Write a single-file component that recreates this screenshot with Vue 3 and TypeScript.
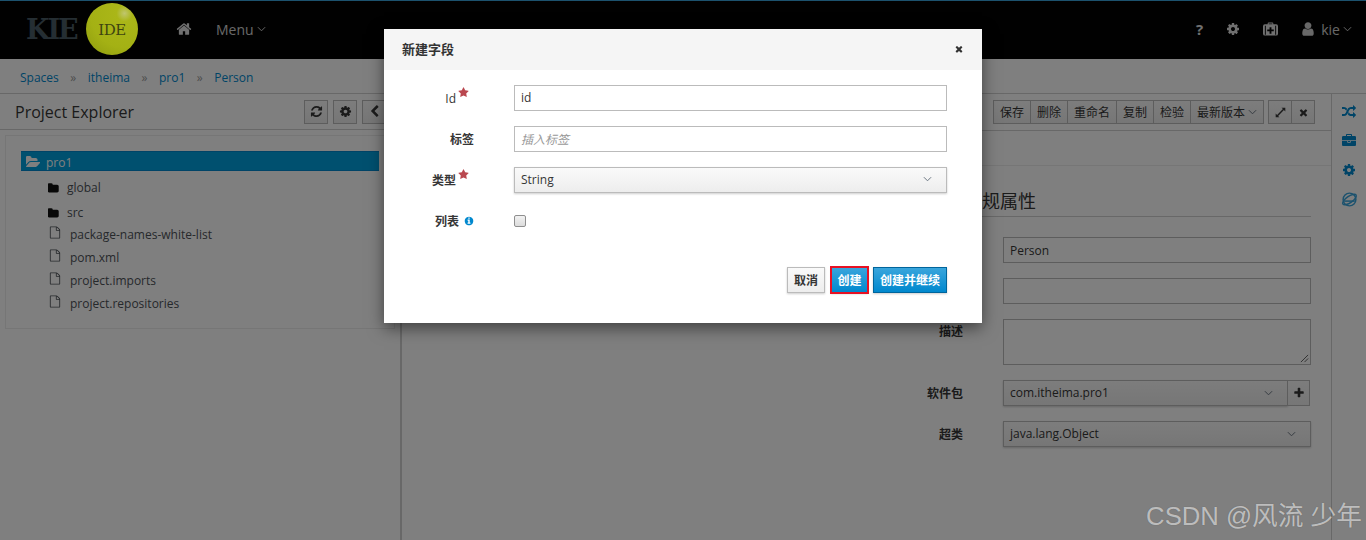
<template>
  <div class="app">
    <header class="topbar">
      <div class="logo">
        <span class="kie">KIE</span>
        <span class="ball">IDE</span>
      </div>
      <svg class="ico home" viewBox="0 0 1792 1792"><path :d="icons.home" /></svg>
      <span class="menu">Menu<svg class="caret" viewBox="0 0 10 6"><path d="M1 1l4 4 4-4" /></svg></span>
      <div class="util">
        <span class="help">?</span>
        <svg class="ico tool" viewBox="0 0 1792 1792"><path :d="icons.cog" /></svg>
        <svg class="ico tool kit" viewBox="0 0 16 14">
          <path fill-rule="evenodd" d="M5 2V1q0-1 1-1h4q1 0 1 1v1h3q2 0 2 2v8q0 2-2 2H2q-2 0-2-2V4q0-2 2-2zm1 0h4V1H6zM7 5v2.500H4.500v2H7V12h2V9.500h2.500v-2H9V5zM2 3.500V13h1V3.500zM13 3.500V13h1V3.500z" />
        </svg>
        <span class="who">
          <svg class="ico tool user" viewBox="0 0 1792 1792"><path :d="icons.user" /></svg>
          kie<svg class="caret" viewBox="0 0 10 6"><path d="M1 1l4 4 4-4" /></svg>
        </span>
      </div>
    </header>

    <nav class="crumbs">
      <template v-for="(c, i) in crumbs" :key="c">
        <span v-if="i" class="sep">»</span>
        <a>{{ c }}</a>
      </template>
    </nav>

    <div class="workspace">
      <aside class="explorer">
        <div class="ex-head">
          <h2>Project Explorer</h2>
          <div class="ex-tools">
            <button class="sq"><svg class="ico" viewBox="0 0 1792 1792"><path :d="icons.refresh" /></svg></button>
            <button class="sq"><svg class="ico" viewBox="0 0 1792 1792"><path :d="icons.cog" /></svg></button>
            <button class="sq"><svg class="ico" viewBox="0 0 1792 1792"><path :d="icons.left" /></svg></button>
          </div>
        </div>
        <div class="tree">
          <div class="selected">
            <svg class="ico" viewBox="0 0 1792 1792"><path :d="icons.folderOpen" /></svg>
            pro1
          </div>
          <div class="folders">
            <div v-for="f in folders" :key="f" class="folder">
              <svg class="ico" viewBox="0 0 1792 1792"><path :d="icons.folder" /></svg>
              {{ f }}
            </div>
          </div>
          <div v-for="f in files" :key="f" class="file">
            <svg class="ico" viewBox="0 0 1792 1792"><path :d="icons.file" /></svg>
            {{ f }}
          </div>
        </div>
      </aside>

      <main class="editor">
        <div class="toolbar">
          <div class="btn-group">
            <button v-for="a in actions" :key="a">{{ a }}</button>
            <button>最新版本<svg class="caret dark" viewBox="0 0 10 6"><path d="M1 1l4 4 4-4" /></svg></button>
          </div>
          <div class="btn-group">
            <button class="mini">
              <svg class="ico" viewBox="0 0 16 16"><path d="M9.500 1H15v5.500l-2-2L4.500 13l2 2H1V9.500l2 2L11.500 3z" /></svg>
            </button>
            <button class="mini"><svg class="ico" viewBox="0 0 1792 1792"><path :d="icons.times" /></svg></button>
          </div>
        </div>
        <div class="tabs"></div>
        <div class="props">
          <h3>常规属性</h3>
          <div class="prop-row">
            <label></label>
            <input class="field" value="Person" />
          </div>
          <div class="prop-row">
            <label></label>
            <input class="field" />
          </div>
          <div class="prop-row top">
            <label>描述</label>
            <div class="field area">
              <svg class="grip" viewBox="0 0 10 10"><path d="M1 9l8-8M5 9l4-4" /></svg>
            </div>
          </div>
          <div class="prop-row">
            <label>软件包</label>
            <div class="joined">
              <div class="select">com.itheima.pro1<svg class="caret dark" viewBox="0 0 10 6"><path d="M1 1l4 4 4-4" /></svg></div>
              <button class="add"><svg class="ico" viewBox="0 0 1792 1792"><path :d="icons.plus" /></svg></button>
            </div>
          </div>
          <div class="prop-row">
            <label>超类</label>
            <div class="select">java.lang.Object<svg class="caret dark" viewBox="0 0 10 6"><path d="M1 1l4 4 4-4" /></svg></div>
          </div>
        </div>
      </main>

      <aside class="rail">
        <svg class="ico" viewBox="0 0 1792 1792"><path :d="icons.random" /></svg>
        <svg class="ico" viewBox="0 0 1792 1792"><path :d="icons.briefcase" /></svg>
        <svg class="ico" viewBox="0 0 1792 1792"><path :d="icons.cog" /></svg>
        <svg class="ico globe" viewBox="0 0 16 16">
          <circle cx="8" cy="8" r="6" />
          <ellipse cx="8" cy="8" rx="7.500" ry="3" transform="rotate(-35 8 8)" />
          <path d="M3 9.500h10" />
        </svg>
      </aside>
    </div>

    <div class="backdrop"></div>

    <section class="modal">
      <div class="modal-head">
        <span>新建字段</span>
        <svg class="ico" viewBox="0 0 1792 1792"><path :d="icons.times" /></svg>
      </div>
      <div class="modal-body">
        <div class="m-row">
          <label class="latin">Id<svg class="star" viewBox="0 0 1792 1792"><path :d="icons.star" /></svg></label>
          <input class="m-input" value="id" />
        </div>
        <div class="m-row">
          <label class="plain">标签</label>
          <input class="m-input" placeholder="插入标签" />
        </div>
        <div class="m-row">
          <label>类型<svg class="star" viewBox="0 0 1792 1792"><path :d="icons.star" /></svg></label>
          <div class="m-select">String<svg class="caret dark" viewBox="0 0 10 6"><path d="M1 1l4 4 4-4" /></svg></div>
        </div>
        <div class="m-row">
          <label class="plain">列表<svg class="info" viewBox="0 0 1792 1792"><path :d="icons.info" /></svg></label>
          <span class="check"></span>
        </div>
        <div class="m-foot">
          <button class="cancel">取消</button>
          <button class="primary marked">创建</button>
          <button class="primary">创建并继续</button>
        </div>
      </div>
    </section>

    <div class="watermark">CSDN @风流 少年</div>
  </div>
</template>

<script setup lang="ts">
const crumbs: string[] = ['Spaces', 'itheima', 'pro1', 'Person']
const folders: string[] = ['global', 'src']
const files: string[] = ['package-names-white-list', 'pom.xml', 'project.imports', 'project.repositories']
const actions: string[] = ['保存', '删除', '重命名', '复制', '检验']

const icons: Record<string, string> = {
  home: 'M1472 992v480q0 26-19 45t-45 19h-384v-384h-256v384h-384q-26 0-45-19t-19-45v-480q0-1 .5-3t.5-3l575-474 575 474q1 2 1 6zm223-69l-62 74q-8 9-21 11h-3q-13 0-21-7l-692-577-692 577q-12 8-24 7-13-2-21-11l-62-74q-8-10-7-23.5t11-21.5l719-599q32-26 76-26t76 26l244 204v-195q0-14 9-23t23-9h192q14 0 23 9t9 23v408l219 182q10 8 11 21.5t-7 23.5z',
  cog: 'M1152 896q0-106-75-181t-181-75-181 75-75 181 75 181 181 75 181-75 75-181zm512-109v222q0 12-8 23t-20 13l-185 28q-19 54-39 91 35 50 107 138 10 12 10 25t-9 23q-27 37-99 108t-94 71q-12 0-26-9l-138-108q-44 23-91 38-16 136-29 186-7 28-36 28h-222q-14 0-24.5-8.500t-11.500-21.500l-28-184q-49-16-90-37l-141 107q-10 9-25 9-14 0-25-11-126-114-165-168-7-10-7-23 0-12 8-23 15-21 51-66.500t54-70.500q-27-50-41-99l-183-27q-13-2-21-12.500t-8-23.500v-222q0-12 8-23t19-13l186-28q14-46 39-92-40-57-107-138-10-12-10-24 0-10 9-23 26-36 98.500-107.500t94.500-71.500q13 0 26 10l138 107q44-23 91-38 16-136 29-186 7-28 36-28h222q14 0 24.500 8.500t11.500 21.500l28 184q49 16 90 37l142-107q9-9 24-9 13 0 25 10 129 119 165 170 7 8 7 22 0 12-8 23-15 21-51 66.500t-54 70.500q26 50 41 98l183 28q13 2 21 12.500t8 23.500z',
  user: 'M1536 1399q0 109-62.500 187t-150.500 78h-854q-88 0-150.500-78t-62.500-187q0-85 8.500-160.500t31.500-152 58.500-131 94-89 134.500-34.500q131 128 313 128t313-128q76 0 134.500 34.500t94 89 58.500 131 31.500 152 8.500 160.500zm-256-887q0 159-112.500 271.500t-271.500 112.500-271.500-112.500-112.500-271.500 112.500-271.500 271.500-112.500 271.500 112.500 112.500 271.500z',
  refresh: 'M1639 1056q0 5-1 7-64 268-268 434.500t-478 166.500q-146 0-282.500-55t-243.500-157l-129 129q-19 19-45 19t-45-19-19-45v-448q0-26 19-45t45-19h448q26 0 45 19t19 45-19 45l-137 137q71 66 161 102t187 36q134 0 250-65t186-179q11-17 53-117 8-23 30-23h192q13 0 22.500 9.500t9.500 22.500zm25-800v448q0 26-19 45t-45 19h-448q-26 0-45-19t-19-45 19-45l138-138q-148-137-349-137-134 0-250 65t-186 179q-11 17-53 117-8 23-30 23h-199q-13 0-22.500-9.500t-9.500-22.500v-7q65-268 270-434.500t480-166.500q146 0 284 55.500t245 156.500l130-129q19-19 45-19t45 19 19 45z',
  left: 'M1427 301l-531 531 531 531q19 19 19 45t-19 45l-166 166q-19 19-45 19t-45-19l-742-742q-19-19-19-45t19-45l742-742q19-19 45-19t45 19l166 166q19 19 19 45t-19 45z',
  times: 'M1490 1322q0 40-28 68l-136 136q-28 28-68 28t-68-28l-294-294-294 294q-28 28-68 28t-68-28l-136-136q-28-28-28-68t28-68l294-294-294-294q-28-28-28-68t28-68l136-136q28-28 68-28t68 28l294 294 294-294q28-28 68-28t68 28l136 136q28 28 28 68t-28 68l-294 294 294 294q28 28 28 68z',
  folder: 'M1600 648v704q0 92-66 158t-158 66h-1216q-92 0-158-66t-66-158v-960q0-92 66-158t158-66h320q92 0 158 66t66 158v32h672q92 0 158 66t66 158z',
  folderOpen: 'M1815 952q0 31-31 66l-336 396q-43 51-120.500 86.500t-143.500 35.500h-1088q-34 0-60.500-13t-26.500-43q0-31 31-66l336-396q43-51 120.500-86.500t143.500-35.500h1088q34 0 60.500 13t26.500 43zm-343-344v160h-832q-94 0-197 47.500t-164 119.500l-337 396-5 6q0-4-.5-12.500t-.5-12.500v-960q0-92 66-158t158-66h320q92 0 158 66t66 158v32h544q92 0 158 66t66 158z',
  file: 'M1596 380q28 28 48 76t20 88v1152q0 40-28 68t-68 28h-1344q-40 0-68-28t-28-68v-1600q0-40 28-68t68-28h896q40 0 88 20t76 48zm-444-244v376h376q-10-29-22-41l-313-313q-12-12-41-22zm384 1528v-1024h-416q-40 0-68-28t-28-68v-416h-768v1536h1280z',
  star: 'M1728 647q0 22-26 48l-363 354 86 500q1 7 1 20 0 21-10.500 35.500t-30.500 14.500q-19 0-40-12l-449-236-449 236q-22 12-40 12-21 0-31.500-14.500t-10.500-35.500q0-6 2-20l86-500-364-354q-25-27-25-48 0-37 56-46l502-73 225-455q19-41 49-41t49 41l225 455 502 73q56 9 56 46z',
  info: 'M1152 1376v-160q0-14-9-23t-23-9h-96v-512q0-14-9-23t-23-9h-320q-14 0-23 9t-9 23v160q0 14 9 23t23 9h96v320h-96q-14 0-23 9t-9 23v160q0 14 9 23t23 9h448q14 0 23-9t9-23zm-128-896v-160q0-14-9-23t-23-9h-192q-14 0-23 9t-9 23v160q0 14 9 23t23 9h192q14 0 23-9t9-23zm640 416q0 209-103 385.500t-279.500 279.500-385.500 103-385.500-103-279.500-279.500-103-385.500 103-385.500 279.500-279.500 385.500-103 385.500 103 279.500 279.500 103 385.500z',
  plus: 'M1600 736v192q0 40-28 68t-68 28h-416v416q0 40-28 68t-68 28h-192q-40 0-68-28t-28-68v-416h-416q-40 0-68-28t-28-68v-192q0-40 28-68t68-28h416v-416q0-40 28-68t68-28h192q40 0 68 28t28 68v416h416q40 0 68 28t28 68z',
  random: 'M666 481q-60 92-137 273-22-45-37-72.500t-40.500-63.500-51-56.500-63-35-81.500-14.500h-224q-14 0-23-9t-9-23v-192q0-14 9-23t23-9h224q250 0 410 225zm1126 799q0 14-9 23l-320 320q-9 9-23 9-13 0-22.500-9.500t-9.500-22.500v-192q-32 0-85 .5t-81 1-73-1-71-5-64-10.500-63-18.500-58-28.500-59-40-55-53.500-56-69.500q59-93 136-273 22 45 37 72.500t40.500 63.500 51 56.500 63 35 81.500 14.500h256v-192q0-14 9-23t23-9q12 0 24 10l319 319q9 9 9 23zm0-896q0 14-9 23l-320 320q-9 9-23 9-13 0-22.500-9.500t-9.500-22.500v-192h-256q-48 0-87 15t-69 45-51 61.500-45 77.500q-32 62-78 171-29 66-49.500 111t-54 105-64 100-74 83-90 68.500-106.500 42-128 16.500h-224q-14 0-23-9t-9-23v-192q0-14 9-23t23-9h224q48 0 87-15t69-45 51-61.500 45-77.500q32-62 78-171 29-66 49.500-111t54-105 64-100 74-83 90-68.500 106.500-42 128-16.500h256v-192q0-14 9-23t23-9q12 0 24 10l319 319q9 9 9 23z',
  briefcase: 'M640 256h512v-128h-512v128zm1152 640v480q0 66-47 113t-113 47h-1472q-66 0-113-47t-47-113v-480h672v160q0 26 19 45t45 19h320q26 0 45-19t19-45v-160h672zm-768 0v128h-256v-128h256zm768-480v384h-1792v-384q0-66 47-113t113-47h352v-160q0-40 28-68t68-28h576q40 0 68 28t28 68v160h352q66 0 113 47t47 113z'
}
</script>

<style>
html, body {
  margin: 0;
  background: #fff;
}
</style>

<style scoped>
.app {
  position: relative;
  width: 1366px;
  height: 540px;
  overflow: hidden;
  display: flex;
  flex-direction: column;
  background: #fff;
  color: #363636;
  font: 12px "Open Sans", "Noto Sans CJK SC", sans-serif;
}
.ico {
  width: 14px;
  height: 14px;
  fill: currentColor;
  flex: none;
}
.caret {
  width: 9px;
  height: 6px;
  margin-left: 3px;
  fill: none;
  stroke: #d1d1d1;
  stroke-width: 1.100;
}
.caret.dark {
  stroke: #6b7682;
}
button {
  font: inherit;
  color: inherit;
  cursor: default;
}

/* top bar */
.topbar {
  box-sizing: border-box;
  height: 59px;
  flex: none;
  display: flex;
  align-items: center;
  padding-bottom: 2px;
  border-top: 1px solid #39a5dc;
  background: #030303;
  color: #d1d1d1;
}
.logo {
  display: flex;
  align-items: center;
  margin-left: 26px;
  width: 112px;
}
.kie {
  width: 60px;
  font: 700 27px "DejaVu Serif", serif;
  letter-spacing: -2px;
  color: #4a5c66;
}
/* the logo stays bright above the backdrop */
.ball {
  box-sizing: border-box;
  position: relative;
  z-index: 1;
  width: 52px;
  height: 52px;
  border-radius: 50%;
  display: flex;
  align-items: center;
  justify-content: center;
  padding-top: 1px;
  background: radial-gradient(circle at 74% 20%, #c0c66e 0, #aab618 14%, #a4b114 60%, #8d9a0e 100%);
  font: 15px "DejaVu Serif", serif;
  letter-spacing: -0.500px;
  color: #3e4410;
}
.home {
  width: 16px;
  height: 16px;
  margin-left: 38px;
  color: #e0e0e0;
}
.menu {
  margin-left: 24px;
  font-size: 14px;
  display: flex;
  align-items: center;
}
.util {
  margin-left: auto;
  margin-right: 14px;
  display: flex;
  align-items: center;
  color: #e0e0e0;
}
.help {
  font: 700 15px "Open Sans", sans-serif;
  margin-right: 23px;
}
.tool {
  width: 14px;
  height: 14px;
}
.kit {
  width: 15px;
  margin: 0 22px 0 23px;
}
.who {
  display: flex;
  align-items: center;
  gap: 5px;
  font-size: 14px;
  color: #d1d1d1;
}
.user {
  width: 16px;
  height: 16px;
}
.who .caret {
  margin-left: -2px;
}

/* breadcrumb */
.crumbs {
  box-sizing: border-box;
  height: 35px;
  flex: none;
  display: flex;
  align-items: center;
  gap: 11.500px;
  padding: 2px 0 0 20px;
  border-bottom: 1px solid #d1d1d1;
  background: #fff;
  color: #0088ce;
}
.crumbs a {
  color: #0088ce;
}
.sep {
  color: #9c9c9c;
}

/* main area */
.workspace {
  flex: 1;
  display: flex;
  min-height: 0;
}
.explorer {
  box-sizing: border-box;
  width: 402px;
  flex: none;
  border-right: 2px solid #d1d1d1;
}
.ex-head {
  box-sizing: border-box;
  height: 36px;
  display: flex;
  align-items: center;
  justify-content: space-between;
  padding: 0 0 0 15px;
  border-bottom: 1px solid #d1d1d1;
}
.ex-head h2 {
  margin: 0;
  font-size: 16px;
  font-weight: 400;
}
.ex-tools {
  display: flex;
  gap: 5px;
  margin-right: 14px;
}
.sq {
  width: 24px;
  height: 24px;
  padding: 0;
  display: flex;
  align-items: center;
  justify-content: center;
  border: 1px solid #bbb;
  background: linear-gradient(#fafafa, #ededed);
}
.sq .ico {
  width: 13px;
  height: 13px;
}
.tree {
  box-sizing: border-box;
  height: 194px;
  margin: 5px 5px 0;
  padding: 15px 15px 0;
  border: 1px solid #ededed;
  color: #4d5258;
}
.selected {
  box-sizing: border-box;
  height: 20px;
  display: flex;
  align-items: center;
  gap: 6px;
  padding: 2px 0 0 5px;
  background: #00a1de;
  border: 1px solid #0088ce;
  border-width: 1px 0;
  color: #fff;
}
.folders {
  margin: 4px 0 -2px;
}
.folder {
  height: 25px;
  display: flex;
  align-items: center;
  gap: 7px;
  padding-left: 27px;
}
.folder .ico {
  width: 12px;
  height: 12px;
  color: #111;
}
.file {
  height: 23px;
  display: flex;
  align-items: center;
  gap: 9px;
  padding-left: 28px;
}
.file .ico {
  width: 12px;
  height: 13px;
  margin-top: -4px;
}

/* editor */
.editor {
  flex: 1;
  min-width: 0;
}
.toolbar {
  box-sizing: border-box;
  height: 37px;
  display: flex;
  justify-content: flex-end;
  align-items: flex-start;
  gap: 5px;
  padding: 6px 16px 0 0;
  border-bottom: 1px solid #d1d1d1;
}
.btn-group {
  display: flex;
}
.btn-group button {
  height: 24px;
  padding: 0 6px;
  display: flex;
  align-items: center;
  margin-left: -1px;
  border: 1px solid #bbb;
  background: linear-gradient(#fafafa, #ededed);
}
.btn-group .mini {
  width: 24px;
  padding: 0;
  justify-content: center;
}
.mini .ico {
  width: 11px;
  height: 11px;
}
.tabs {
  height: 34px;
  border-bottom: 1px solid #ededed;
}
.props {
  width: 400px;
  margin-left: auto;
  margin-right: 20px;
}
.props h3 {
  margin: 23px 0 20px;
  padding: 0 0 3px 53px;
  height: 24px;
  font-size: 18px;
  font-weight: 400;
  line-height: 24px;
  border-bottom: 1px solid #d1d1d1;
}
.prop-row {
  display: grid;
  grid-template-columns: 52px 308px;
  column-gap: 40px;
  align-items: center;
  margin-bottom: 15px;
}
.prop-row label {
  text-align: right;
  font-weight: 600;
  white-space: nowrap;
}
.prop-row.top {
  align-items: start;
}
.prop-row.top label {
  padding-top: 3px;
}
.field {
  box-sizing: border-box;
  width: 308px;
  height: 26px;
  padding: 0 6px;
  border: 1px solid #bbb;
  background: #fff;
  color: #363636;
  font: inherit;
}
.area {
  position: relative;
  height: 46px;
}
.grip {
  position: absolute;
  right: 1px;
  bottom: 1px;
  width: 9px;
  height: 9px;
  fill: none;
  stroke: #555;
}
.select {
  box-sizing: border-box;
  flex: 1;
  height: 26px;
  display: flex;
  align-items: center;
  justify-content: space-between;
  padding: 0 14px 1px 6px;
  border: 1px solid #bbb;
  background: linear-gradient(#fafafa, #ededed);
  box-shadow: 0 1px 2px rgba(3, 3, 3, 0.2);
}
.joined {
  display: flex;
  width: 307px;
}
.add {
  box-sizing: border-box;
  width: 23px;
  height: 26px;
  padding: 0;
  display: flex;
  align-items: center;
  justify-content: center;
  margin-left: -1px;
  border: 1px solid #bbb;
  background: linear-gradient(#fafafa, #ededed);
}
.add .ico {
  width: 12px;
  height: 12px;
}
.rail {
  box-sizing: border-box;
  width: 35px;
  flex: none;
  display: flex;
  flex-direction: column;
  align-items: center;
  gap: 15px;
  padding-top: 11px;
  border-left: 1px solid #d1d1d1;
  color: #0088ce;
}
.globe {
  fill: none;
  stroke: #39a5dc;
  stroke-width: 1.400;
  width: 17px;
  height: 17px;
  margin-top: -1px;
}

/* modal */
.backdrop {
  position: absolute;
  inset: 0;
  background: rgba(0, 0, 0, 0.5);
}
.modal {
  position: absolute;
  left: 384px;
  top: 29px;
  width: 598px;
  height: 294px;
  background: #fff;
  box-shadow: 0 5px 15px rgba(0, 0, 0, 0.5);
}
.modal-head {
  box-sizing: border-box;
  height: 41px;
  display: flex;
  align-items: center;
  justify-content: space-between;
  padding: 0 18px 2px;
  background: #f5f5f5;
  font-size: 13px;
  font-weight: 600;
  color: #333;
}
.modal-head .ico {
  width: 10px;
  height: 10px;
}
.modal-body {
  padding: 15px 35px 0 0;
}
.m-row {
  display: grid;
  grid-template-columns: 90px 433px;
  column-gap: 40px;
  align-items: center;
  justify-content: end;
  min-height: 26px;
  margin-bottom: 15px;
}
.m-row label {
  display: flex;
  justify-content: flex-end;
  align-items: center;
  font-weight: 600;
  padding-right: 6px;
  white-space: nowrap;
}
.m-row label.latin {
  font-weight: 400;
}
.m-row label.plain {
  padding-right: 0;
}
.star {
  width: 11px;
  height: 11px;
  margin: 0 -1px 12px 2px;
  fill: #b9474f;
  flex: none;
}
.info {
  width: 10px;
  height: 10px;
  margin-left: 5px;
  fill: #0088ce;
}
.m-input {
  box-sizing: border-box;
  width: 433px;
  height: 26px;
  padding: 0 6px 1px;
  border: 1px solid #bbb;
  background: #fff;
  font: inherit;
  color: #363636;
  outline: none;
}
.m-input:placeholder-shown {
  padding-bottom: 0;
}
.m-input::placeholder {
  color: #999;
  font-style: italic;
}
.m-select {
  box-sizing: border-box;
  height: 26px;
  display: flex;
  align-items: center;
  justify-content: space-between;
  padding: 0 14px 2px 6px;
  border: 1px solid #bbb;
  background: linear-gradient(#fafafa, #ededed);
  box-shadow: 0 1px 2px rgba(3, 3, 3, 0.2);
}
.check {
  box-sizing: border-box;
  display: block;
  width: 12px;
  height: 12px;
  border: 1px solid #8f8f8f;
  border-radius: 2px;
  background: linear-gradient(#f2f2f2, #dcdcdc);
}
.m-foot {
  display: flex;
  justify-content: flex-end;
  gap: 5px;
  margin-top: 33px;
}
.m-foot button {
  box-sizing: border-box;
  height: 26px;
  padding: 0 6px;
  font-weight: 600;
  white-space: nowrap;
  border: 1px solid #bbb;
  box-shadow: 0 1px 2px rgba(3, 3, 3, 0.2);
}
.cancel {
  background: linear-gradient(#fafafa, #ededed);
}
.m-foot .primary {
  border-color: #00659c;
  background: linear-gradient(#39a5dc, #0088ce);
  color: #fff;
}
.m-foot .marked {
  width: 37px;
  margin-left: 1px;
  padding: 0;
  outline: 2px solid #e81123;
  outline-offset: -1px;
}
.watermark {
  position: absolute;
  right: 4px;
  bottom: 8px;
  font: 25.700px "Liberation Sans", "Noto Sans CJK SC", sans-serif;
  color: rgba(255, 255, 255, 0.6);
  text-shadow: 0 0 1px rgba(0, 0, 0, 0.3);
  white-space: nowrap;
}
</style>
